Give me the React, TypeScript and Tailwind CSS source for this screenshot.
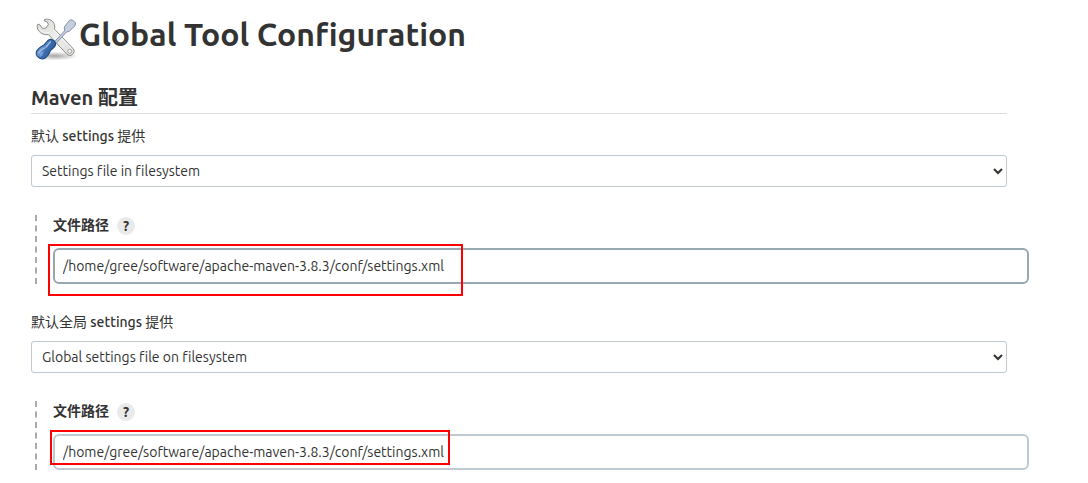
import { useId, useState } from "react";

function ToolsIcon() {
  return (
    <svg viewBox="0 0 48 48" className="h-12 w-12 shrink-0" aria-hidden="true">
      <defs>
        <linearGradient id="wrench" x1="0" y1="0" x2="1" y2="1">
          <stop offset="0" stopColor="#d6d6d6" />
          <stop offset="0.5" stopColor="#eeeeec" />
          <stop offset="1" stopColor="#dcdcda" />
        </linearGradient>
        <linearGradient id="handle" x1="0" y1="0" x2="1" y2="0.6">
          <stop offset="0" stopColor="#3465a4" />
          <stop offset="0.4" stopColor="#6f99d0" />
          <stop offset="0.6" stopColor="#3f6fb0" />
          <stop offset="1" stopColor="#2a5493" />
        </linearGradient>
        <radialGradient id="shadow">
          <stop offset="0" stopColor="#000" stopOpacity="0.35" />
          <stop offset="1" stopColor="#000" stopOpacity="0" />
        </radialGradient>
      </defs>
      <ellipse cx="24" cy="41" rx="23" ry="4.5" fill="url(#shadow)" />
      <path
        d="M13.500 4.500C18 3.300 22.300 5.500 23.500 9.800c.4 1.500.4 2.900 0 4.400L42 33.500c1.700 2 1.500 4.300-.3 5.900-1.700 1.600-4.200 1.400-5.900-.3L17.300 19.500c-4.500.8-9-1.500-10.600-5.500-.6-1.500-.6-3-.2-4.500l2-.2 3.100 4.200 3.600-.6 2.100-3.100-.8-2.700-3.300-1.200z"
        fill="url(#wrench)"
        stroke="#8d8f8a"
        strokeWidth="1"
        strokeLinejoin="round"
      />
      <path
        d="M22.300 14.500L40.800 33.800M8 12.500c1.500 3.800 5.500 6 10 5.200"
        stroke="#fff"
        strokeWidth="1"
        opacity="0.75"
        fill="none"
      />
      <circle cx="38.700" cy="36.300" r="2" fill="#f5f5f3" stroke="#9a9c97" strokeWidth="0.9" />
      <path
        d="M22.500 28L33.600 15.800 33.300 12 38.700 5.200 41.300 4.800 44.500 8 44 10.800 38.300 16.200 35.200 17.200 24.200 29.500z"
        fill="#c5cfde"
        stroke="#8592a8"
        strokeWidth="1"
        strokeLinejoin="round"
      />
      <path
        d="M17 25.500c1.800-1.500 4.300-1.100 6 .5 1.700 1.600 2 3.800.7 5.600-1.700 2.200-3.800 2.800-4.700 5-.7 2.300-2.200 4.500-4.500 6.300-2.300 1.600-5.200 1.200-7.300-.7-2-1.900-2.500-4.600-1.100-6.800 2.200-3.100 4.200-4.200 6.700-5.500 1.800-1 2.400-2.900 4.200-4.400z"
        fill="url(#handle)"
        stroke="#204a87"
        strokeWidth="1.100"
      />
      <path
        d="M19.300 26.800l-4.200 5.400M8 37.500c1.500-2.400 3.400-3.600 5.600-4.500"
        stroke="#a9c5e8"
        strokeWidth="1.300"
        strokeLinecap="round"
        fill="none"
      />
      <ellipse cx="10.500" cy="39" rx="1.500" ry="2.600" transform="rotate(35 10.500 39)" fill="#8fb2df" opacity="0.6" />
    </svg>
  );
}

type ProviderProps = {
  prefix: string;
  option: string;
  path: string;
  inputClass: string;
  markClass: string;
};

function Provider({ prefix, option, path, inputClass, markClass }: ProviderProps) {
  const id = useId();
  const [value, setValue] = useState(path);
  return (
    <section>
      <label htmlFor={`${id}-provider`} className="block h-6 leading-6">
        {prefix} <span className="font-medium">settings</span> 提供
      </label>
      <select
        id={`${id}-provider`}
        className="mt-[7px] block h-8 w-full rounded-[3px] border border-[#bfc9cf] bg-white pl-1.5 text-[#333] [font-variant-ligatures:none]"
      >
        <option>{option}</option>
      </select>
      <div className="-mr-[22px] ml-1 mt-7 border-l-2 border-dashed border-[#aaa] pl-4">
        <div className="flex h-[33px] items-start gap-2">
          <label htmlFor={`${id}-path`} className="font-bold leading-5">
            文件路径
          </label>
          <button
            type="button"
            aria-label="帮助"
            className="mt-0.5 flex size-[18px] items-center justify-center rounded-full bg-[#eaeaea] text-[14px] font-bold leading-none"
          >
            ?
          </button>
        </div>
        <div className="relative">
          <input
            id={`${id}-path`}
            type="text"
            value={value}
            onChange={(e) => setValue(e.target.value)}
            className={`block h-9 w-full rounded-md border-2 bg-white px-2 outline-none ${inputClass}`}
          />
          <span className={`pointer-events-none absolute border-2 border-[#ff0000] ${markClass}`} />
        </div>
      </div>
    </section>
  );
}

export default function App() {
  return (
    <main className="bg-white pb-3 pl-[31px] pr-[81px] pt-[15px] font-['Ubuntu','Noto_Sans','Noto_Sans_CJK_SC',sans-serif] text-[14px] text-[#333]">
      <h1 className="flex h-12 items-start text-[32px] font-bold leading-[38px] [font-variant-ligatures:none]">
        <ToolsIcon />
        Global Tool Configuration
      </h1>
      <h2 className="mt-5 h-[31px] border-b border-[#dcdcdc] text-[20px] font-bold leading-[30px]">
        Maven 配置
      </h2>
      <div className="mt-2.5 flex flex-col gap-[26px]">
        <Provider
          prefix="默认"
          option="Settings file in filesystem"
          path="/home/gree/software/apache-maven-3.8.3/conf/settings.xml"
          inputClass="border-[#98a8b1]"
          markClass="-left-[5px] -top-1 h-[52px] w-[415px]"
        />
        <Provider
          prefix="默认全局"
          option="Global settings file on filesystem"
          path="/home/gree/software/apache-maven-3.8.3/conf/settings.xml"
          inputClass="border-[#bfc9cf]"
          markClass="-left-[3px] -top-1 h-[35px] w-[400px]"
        />
      </div>
    </main>
  );
}
